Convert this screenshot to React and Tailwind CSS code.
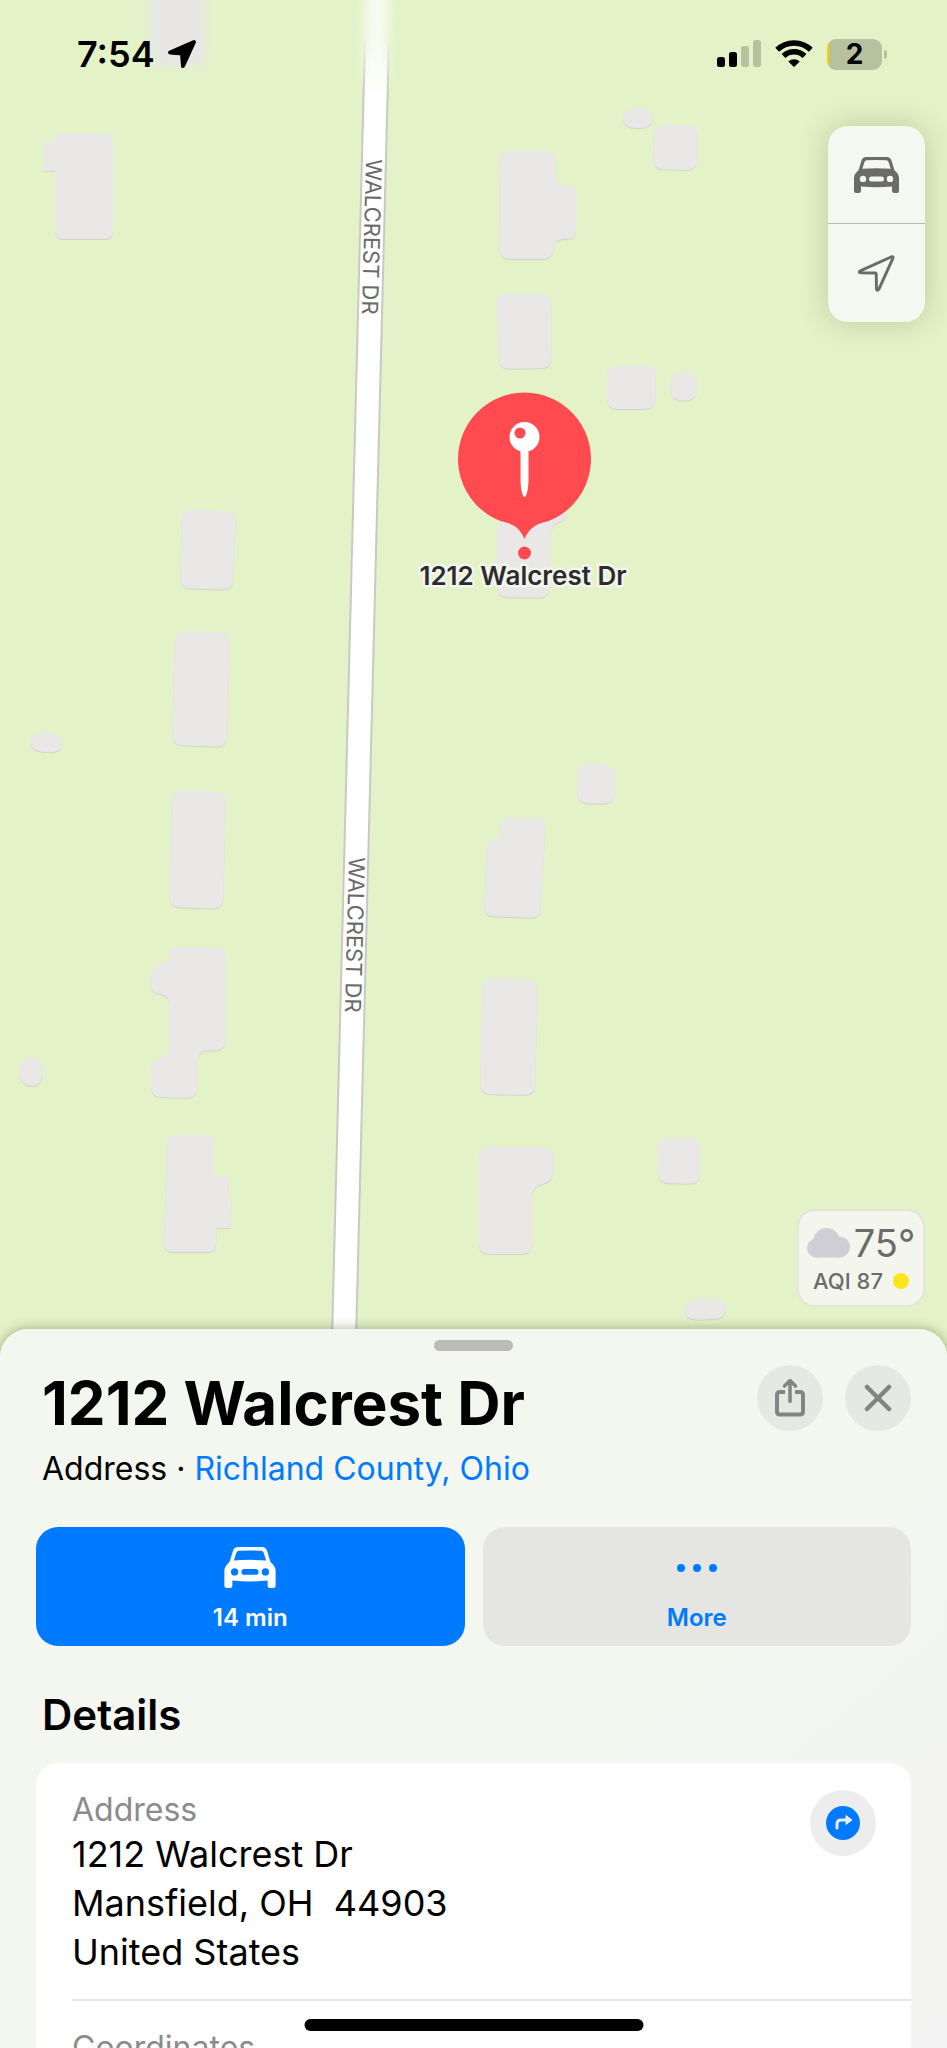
import React from 'react';

// Building footprints as [x, y] corners, with the radius of their corners
const buildings = [
  { r: 10, points: [[499, 151], [555, 151], [556, 185], [576, 185], [576, 239], [554, 239], [553, 259], [500, 259]] },
  { r: 14, points: [[623, 108], [653, 108], [653, 128], [623, 128]] },
  { r: 11, points: [[654, 125], [698, 125], [697, 170], [653, 169]] },
  { r: 11, points: [[497, 294], [551, 293], [552, 368], [499, 369]] },
  { r: 11, points: [[607, 366], [656, 365], [655, 409], [607, 409]] },
  { r: 13, points: [[670, 372], [697, 372], [697, 401], [670, 400]] },
  { r: 11, points: [[497, 490], [568, 490], [566, 521], [551, 524], [549, 598], [497, 597]] },
  { r: 11, points: [[182, 509], [236, 511], [233, 590], [180, 588]] },
  { r: 11, points: [[175, 631], [230, 632], [227, 747], [172, 745]] },
  { r: 14, points: [[30, 732], [62, 733], [62, 753], [30, 751]] },
  { r: 11, points: [[172, 790], [226, 792], [223, 909], [169, 907]] },
  { r: 11, points: [[169, 947], [226, 947], [226, 1050], [198, 1051], [197, 1098], [151, 1097], [151, 1060], [169, 1057], [169, 995], [150, 993], [151, 967], [169, 963]] },
  { r: 14, points: [[20, 1058], [43, 1058], [43, 1086], [20, 1086]] },
  { r: 11, points: [[578, 763], [615, 765], [614, 804], [577, 803]] },
  { r: 9, points: [[501, 817], [546, 819], [540, 918], [484, 916], [487, 840], [500, 840]] },
  { r: 11, points: [[483, 977], [538, 980], [535, 1095], [480, 1094]] },
  { r: 11, points: [[479, 1147], [554, 1147], [553, 1182], [532, 1186], [532, 1254], [479, 1254]] },
  { r: 11, points: [[658, 1138], [700, 1138], [700, 1184], [658, 1183]] },
  { r: 14, points: [[685, 1300], [726, 1298], [726, 1319], [685, 1320]] },
];

function roundedPath(points, r) {
  const n = points.length;
  const towards = ([ax, ay], [bx, by]) => {
    const len = Math.hypot(bx - ax, by - ay);
    const t = Math.min(r, len / 2) / len;
    return `${(ax + (bx - ax) * t).toFixed(1)} ${(ay + (by - ay) * t).toFixed(1)}`;
  };
  return (
    points
      .map((p, i) => {
        const prev = points[(i + n - 1) % n];
        const next = points[(i + 1) % n];
        return `${i ? 'L' : 'M'}${towards(p, prev)}Q${p[0]} ${p[1]} ${towards(p, next)}`;
      })
      .join('') + 'Z'
  );
}

function Road() {
  return (
    <>
      <line x1="379" y1="-40" x2="326" y2="2048" stroke="#c8c9c5" strokeWidth="26" />
      <line x1="379" y1="-40" x2="326" y2="2048" stroke="#ffffff" strokeWidth="22" />
    </>
  );
}

function MapCanvas() {
  return (
    <svg
      className="absolute inset-0 h-full w-full"
      viewBox="0 0 947 2048"
      preserveAspectRatio="xMidYMin slice"
      role="img"
      aria-label="Map of Walcrest Dr"
    >
      <defs>
        <filter id="soft" x="-50%" y="-50%" width="200%" height="200%">
          <feGaussianBlur stdDeviation="5" />
        </filter>
        <filter id="softer" filterUnits="userSpaceOnUse" x="300" y="-60" width="160" height="240">
          <feGaussianBlur stdDeviation="6" />
        </filter>
        <linearGradient id="fade" x1="0" y1="0" x2="0" y2="1">
          <stop offset="0.4" stopColor="#000" />
          <stop offset="1" stopColor="#fff" />
        </linearGradient>
        <mask id="below" maskUnits="userSpaceOnUse" x="0" y="0" width="947" height="2048">
          <rect x="0" y="0" width="947" height="95" fill="url(#fade)" />
          <rect x="0" y="95" width="947" height="1953" fill="#fff" />
        </mask>
      </defs>

      <rect x="150" y="-20" width="55" height="86" rx="6" fill="#e8e7e5" filter="url(#soft)" />

      <g fill="#e9e8e6" className="drop-shadow-[0px_1px_0px_#d3d4cc]">
        <path d="M55 133H105Q113 133 113 141V231Q113 239 105 239H63Q55 239 55 231V171H43V142H55Z" />
        <path d="M175 1135H206Q214 1135 214 1143V1176H229L228 1199H232L230 1228H217L216 1244Q216 1252 208 1252H172Q164 1252 164 1244L167 1143Q167 1135 175 1135Z" />
        {buildings.map((b, i) => (
          <path key={i} d={roundedPath(b.points, b.r)} />
        ))}
      </g>

      <g filter="url(#softer)">
        <line x1="377" y1="-40" x2="376" y2="80" stroke="#f9fbf5" strokeWidth="22" />
      </g>
      <g mask="url(#below)">
        <Road />
      </g>

      <g fill="#6a6b69" fontSize="22" fontFamily="Inter, sans-serif">
        <text transform="translate(366 159) rotate(91.5)">WALCREST DR</text>
        <text transform="translate(349 857) rotate(91.5)">WALCREST DR</text>
      </g>

      {/* Dropped pin */}
      <path
        fill="#ff4b50"
        d="M524.500 539C521 531 516 524 501 521.200A66.500 66.500 0 1 1 548 521.200C533 524 528 531 524.500 539Z"
      />
      <circle cx="524.500" cy="553" r="6.500" fill="#ff4b50" />
      <path fill="#ffffff" d="M520.500 449H528.500V478Q528.500 490 525.800 496Q524.500 498 523.200 496Q520.500 490 520.500 478Z" />
      <circle cx="524.500" cy="437" r="15" fill="#ffffff" />
      <circle cx="520" cy="433" r="5.500" fill="#ff4b50" />
      <text
        x="523"
        y="585"
        textAnchor="middle"
        fontFamily="Inter, sans-serif"
        fontSize="26"
        fontWeight="600"
        fill="#2c2d2b"
        stroke="#f4f5f0"
        strokeWidth="5"
        strokeLinejoin="round"
        paintOrder="stroke"
      >
        1212 Walcrest Dr
      </text>
    </svg>
  );
}

function CarIcon({ className }) {
  return (
    <svg className={className} viewBox="0 0 45 36" fill="currentColor" aria-hidden="true">
      <path
        fillRule="evenodd"
        d="M12 0Q22.500 -.6 33 0Q36.500 .2 37.500 3.500L40.500 13.200Q45 17 45 21V34Q45 36 43 36H40.500Q38 36 38 34V29.500Q22.500 31 7 29.500V34Q7 36 4.500 36H2Q0 36 0 34V21Q0 17 4.500 13.200L7.500 3.500Q8.500 .2 12 0ZM12.800 3.300Q11 3.500 10.500 5L8.300 11.800Q22.500 10.800 36.700 11.800L34.500 5Q34 3.500 32.200 3.300Q22.500 2.800 12.800 3.300ZM9 18.700A3.200 3.200 0 1 0 9 25.100A3.200 3.200 0 1 0 9 18.700ZM36 18.700A3.200 3.200 0 1 0 36 25.100A3.200 3.200 0 1 0 36 18.700ZM17.500 19.400H27.500Q30 19.400 30 21.900Q30 24.400 27.500 24.400H17.500Q15 24.400 15 21.900Q15 19.400 17.500 19.400Z"
      />
    </svg>
  );
}

function StatusBar() {
  return (
    <div className="relative flex items-center justify-between pt-8 pr-[60px] pl-[77px] text-black">
      <div className="flex items-center gap-3">
        <span className="text-[36px] leading-[44px] font-semibold">7:54</span>
        <svg className="h-[30px] w-[30px]" viewBox="0 0 30 30" aria-hidden="true">
          <path
            d="M27 3L3 13.500L15 14.500L16 27Z"
            fill="currentColor"
            stroke="currentColor"
            strokeWidth="4"
            strokeLinejoin="round"
          />
        </svg>
      </div>
      <div className="flex items-center gap-3.5">
        <svg className="h-[28px] w-[44px]" viewBox="0 0 44 28" aria-label="Signal: two bars">
          <rect x="0" y="17" width="8" height="10" rx="2.500" />
          <rect x="12" y="12" width="8" height="15" rx="2.500" />
          <rect x="24" y="6" width="8" height="21" rx="2.500" fill="#b6c29f" />
          <rect x="36" y="0" width="8" height="27" rx="2.500" fill="#b6c29f" />
        </svg>
        <svg className="h-[28px] w-[38px]" viewBox="0 0 38 28" fill="none" stroke="currentColor" strokeWidth="5.500" aria-label="Wi-Fi">
          <path d="M2.200 9.800A24 24 0 0 1 35.800 9.800" />
          <path d="M8.500 16A15.300 15.300 0 0 1 29.500 16" />
          <path d="M13.300 21.400A8.300 8.300 0 0 1 24.700 21.400L19.600 26.600Q19 27.200 18.400 26.600Z" fill="currentColor" stroke="none" />
        </svg>
        <div className="flex items-center gap-0.5">
          <div className="flex h-[31px] w-[55px] items-center justify-center rounded-[9px] bg-[linear-gradient(to_right,#ffcc00_2px,#b6c29f_2px)]">
            <span className="text-[28px] leading-[31px] font-bold">2</span>
          </div>
          <div className="h-[9px] w-[3px] rounded-r-full bg-[#b6c29f]" />
        </div>
      </div>
    </div>
  );
}

function MapControls() {
  return (
    <div className="flex w-[97px] flex-col divide-y divide-[#b9bab5] overflow-hidden rounded-[20px] bg-[#f5f7f1] text-[#6b6b6a] shadow-[0_0_28px_rgba(70,90,30,0.25)]">
      <button type="button" aria-label="Driving map" className="flex h-[98px] items-center justify-center">
        <CarIcon className="h-9 w-[45px]" />
      </button>
      <button type="button" aria-label="My location" className="flex h-[98px] items-center justify-center">
        <svg className="h-[37px] w-[37px]" viewBox="0 0 38 38" fill="none" stroke="currentColor" strokeWidth="3" strokeLinejoin="round" aria-hidden="true">
          <path d="M34.500 1.800Q36.500 1.300 35.800 3.500L21.500 35Q19.700 37.500 19 35L18.700 19.500Q18.700 18.500 17.700 18.500L2.500 18.200Q0 17.800 2.300 16.300Z" />
        </svg>
      </button>
    </div>
  );
}

function WeatherCard() {
  return (
    <div className="flex w-[128px] flex-col items-center justify-center gap-0.5 rounded-[18px] border-2 border-[#e2e5dc] bg-[#f4f6ee] py-2.5 text-[#6b6c69]">
      <div className="flex items-center">
        <svg className="h-[30px] w-[43px]" viewBox="0 0 43 30" fill="#cfced4" aria-label="Cloudy">
          <circle cx="9.500" cy="20" r="9.500" />
          <circle cx="19.500" cy="13.500" r="13.500" />
          <circle cx="32.500" cy="19" r="10.500" />
          <rect x="9" y="17" width="24" height="12.500" />
        </svg>
        <span className="ml-1 text-[38px] leading-[44px] font-normal">75°</span>
      </div>
      <div className="flex items-center gap-2.5">
        <span className="text-[22px] leading-7 font-medium">AQI 87</span>
        <span className="h-4 w-4 rounded-full bg-[#ffe41c]" />
      </div>
    </div>
  );
}

function RoundButton({ label, children }) {
  return (
    <button
      type="button"
      aria-label={label}
      className="flex h-[66px] w-[66px] shrink-0 items-center justify-center rounded-full bg-[#e6e8e3] text-[#838485]"
    >
      {children}
    </button>
  );
}

function PlaceSheet() {
  return (
    <main className="relative flex-1 rounded-t-[28px] bg-linear-to-br from-[#f4f7f0] from-50% to-[#f4f4f4] px-9 pt-[11px] shadow-[0_0_12px_rgba(60,80,20,0.45)]">
      <div className="mx-auto h-[11px] w-[79px] rounded-full bg-[#bbbcb8]" />

      <header className="mt-3.5 flex items-start gap-[22px]">
        <div className="min-w-0 flex-1 pl-[6px]">
          <h1 className="text-[60px] leading-[76px] font-bold whitespace-nowrap text-black">1212 Walcrest Dr</h1>
          <p className="mt-2 text-[32px] leading-[40px] whitespace-nowrap text-black">
            Address ·{' '}
            <a href="#county" className="text-[#007aff]">
              Richland County, Ohio
            </a>
          </p>
        </div>
        <RoundButton label="Share">
          <svg className="h-[40px] w-[32px]" viewBox="0 0 32 40" fill="none" stroke="currentColor" strokeWidth="4" strokeLinecap="round" strokeLinejoin="round" aria-hidden="true">
            <path strokeLinecap="butt" d="M11 14H6Q3 14 3 17V33.500Q3 36.500 6 36.500H26Q29 36.500 29 33.500V17Q29 14 26 14H21" />
            <path d="M16 23.500V3M10.500 8L16 2.500L21.500 8" strokeWidth="3.500" />
          </svg>
        </RoundButton>
        <RoundButton label="Close">
          <svg className="h-7 w-7" viewBox="0 0 28 28" fill="none" stroke="currentColor" strokeWidth="4.500" strokeLinecap="round" aria-hidden="true">
            <path d="M3 3L25 25M25 3L3 25" />
          </svg>
        </RoundButton>
      </header>

      <div className="mt-[38px] grid grid-cols-2 gap-[18px]">
        <button type="button" className="flex h-[119px] flex-col items-center rounded-[22px] bg-[#007aff] pt-5 text-white">
          <CarIcon className="h-[41px] w-[52px]" />
          <span className="mt-3.5 text-[24px] leading-8 font-semibold">14 min</span>
        </button>
        <button type="button" className="flex h-[119px] flex-col items-center rounded-[22px] bg-[#e5e6e3] pt-5 text-[#007aff]">
          <span className="flex h-[41px] items-center gap-2">
            <span className="h-2 w-2 rounded-full bg-current" />
            <span className="h-2 w-2 rounded-full bg-current" />
            <span className="h-2 w-2 rounded-full bg-current" />
          </span>
          <span className="mt-3.5 text-[24px] leading-8 font-semibold">More</span>
        </button>
      </div>

      <h2 className="mt-[41px] pl-[6px] text-[42px] leading-[56px] font-semibold text-black">Details</h2>

      <section className="mt-5 rounded-[22px] bg-white pl-9">
        <div className="flex items-start justify-between border-b-2 border-[#e7e7e7] pt-[27px] pr-[35px] pb-[22px]">
          <div>
            <h3 className="text-[32px] leading-10 font-normal text-[#8b8b8e]">Address</h3>
            <address className="text-[36px] leading-[49px] whitespace-pre text-black not-italic">
              1212 Walcrest Dr
              <br />
              {'Mansfield, OH  44903'}
              <br />
              United States
            </address>
          </div>
          <button
            type="button"
            aria-label="Directions"
            className="flex h-[66px] w-[66px] items-center justify-center rounded-full bg-[#ededee]"
          >
            <svg className="h-[34px] w-[34px]" viewBox="0 0 34 34" aria-hidden="true">
              <circle cx="17" cy="17" r="17" fill="#007aff" />
              <path d="M11 22V18Q11 14 15 14H20" fill="none" stroke="#ededee" strokeWidth="3" strokeLinecap="round" />
              <path d="M20 9.500L26 14L20 18.500Z" fill="#ededee" stroke="#ededee" strokeWidth="1" strokeLinejoin="round" />
            </svg>
          </button>
        </div>
        <div className="pt-[27px] pb-9">
          <h3 className="text-[32px] leading-10 font-normal text-[#8b8b8e]">Coordinates</h3>
        </div>
      </section>
    </main>
  );
}

export default function App() {
  return (
    <div className="relative flex h-screen flex-col overflow-hidden bg-[#e3f2c7] font-[Inter,sans-serif]">
      <MapCanvas />
      <div className="relative flex h-[64.9vh] shrink-0 flex-col">
        <StatusBar />
        <div className="mt-[50px] mr-[22px] mb-[22px] flex flex-1 flex-col items-end justify-between">
          <MapControls />
          <WeatherCard />
        </div>
      </div>
      <PlaceSheet />
      {/* Home indicator */}
      <div className="absolute bottom-[17px] left-1/2 h-3 w-[339px] -translate-x-1/2 rounded-full bg-black" />
    </div>
  );
}
